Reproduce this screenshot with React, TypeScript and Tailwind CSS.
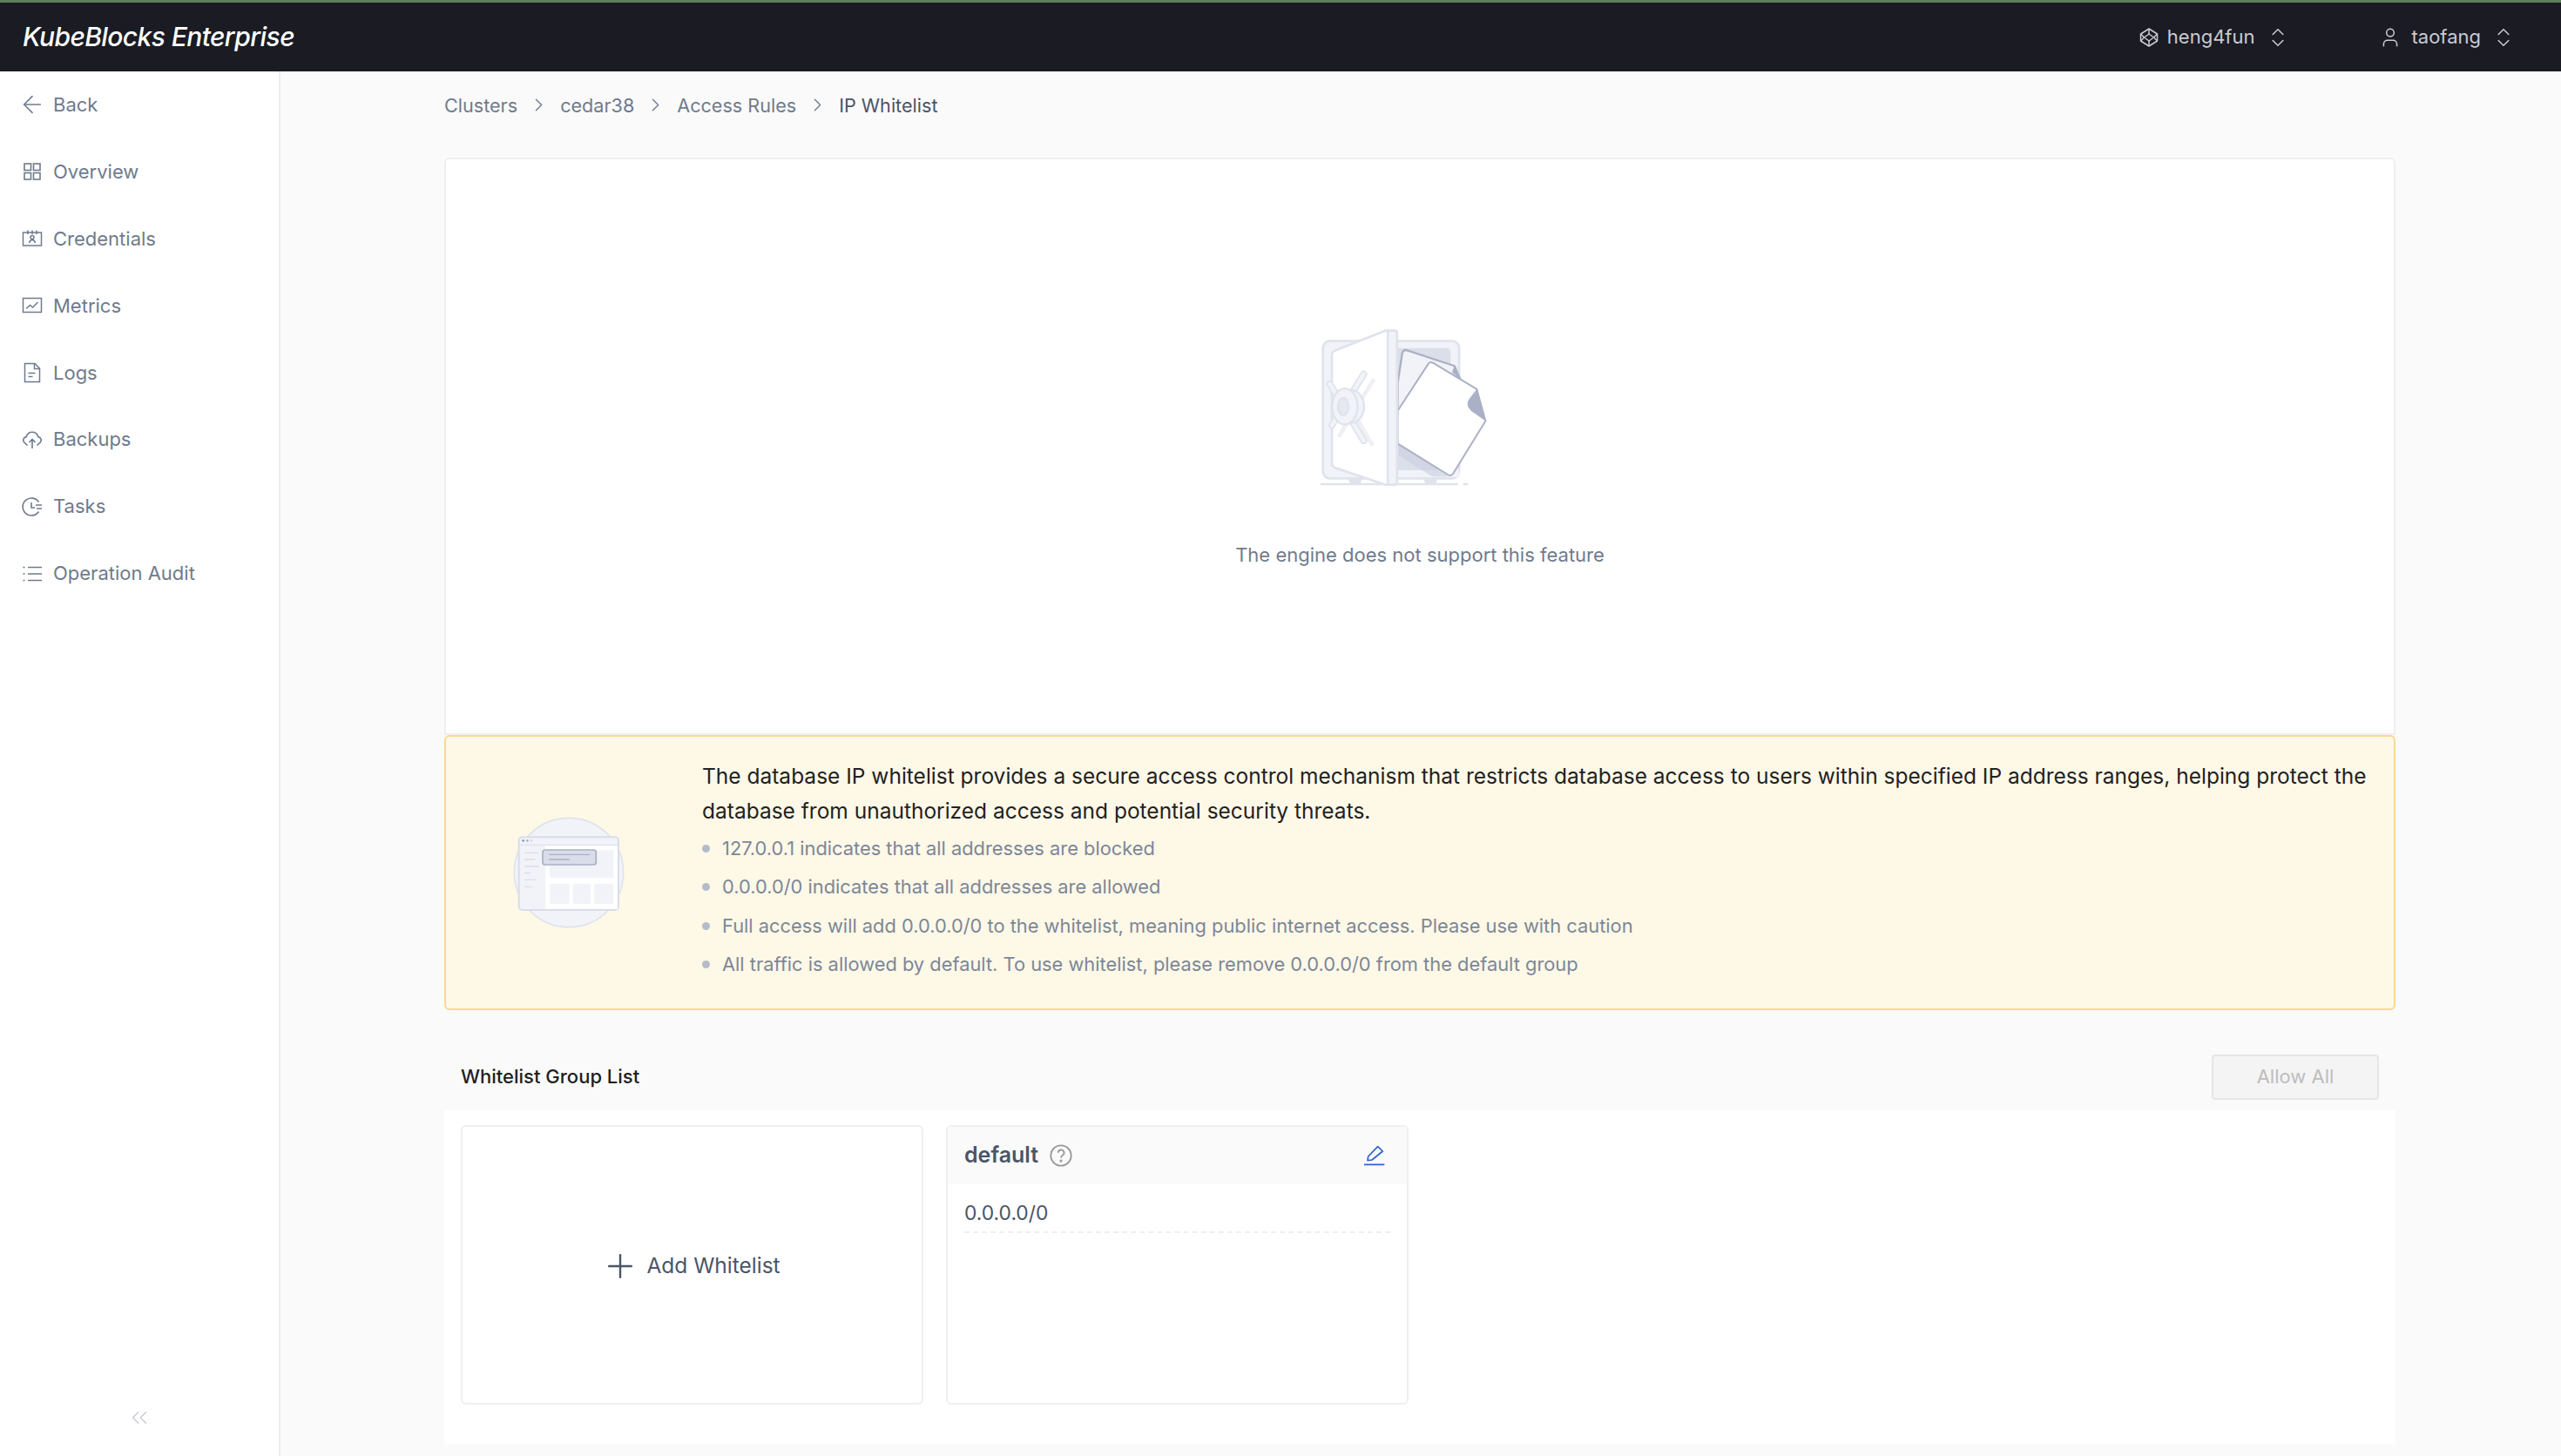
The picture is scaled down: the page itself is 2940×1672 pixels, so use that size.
import { ArrowLeft, ChevronRight, ChevronsLeft, ChevronsUpDown, Plus, User } from "lucide-react"

function OverviewIcon() {
  return (
    <svg viewBox="0 0 24 24" className="h-[24px] w-[24px]" fill="none" stroke="currentColor" strokeWidth="1.6">
      <rect x="3" y="3" width="7.5" height="7.5" />
      <rect x="13.5" y="3" width="7.5" height="7.5" />
      <rect x="3" y="13.5" width="7.5" height="7.5" />
      <rect x="13.5" y="13.5" width="7.5" height="7.5" />
    </svg>
  )
}

function CredentialsIcon() {
  return (
    <svg viewBox="0 0 24 24" className="h-[24px] w-[24px]" fill="none" stroke="currentColor" strokeWidth="1.5">
      <path d="M1.5 5h21v15h-21z" />
      <path d="M7 2.5v4.5M12 2.5v4.5M17 2.5v4.5" />
      <circle cx="12" cy="10.5" r="2" />
      <path d="M8.5 17c.5-2.5 2-3.5 3.5-3.5s3 1 3.5 3.5" />
    </svg>
  )
}

function MetricsIcon() {
  return (
    <svg viewBox="0 0 24 24" className="h-[24px] w-[24px]" fill="none" stroke="currentColor" strokeWidth="1.5">
      <rect x="1.5" y="3.5" width="21" height="16" />
      <path d="M5 15.5l4.5-4 3 2.5 6-6" />
    </svg>
  )
}

function LogsIcon() {
  return (
    <svg viewBox="0 0 24 24" className="h-[24px] w-[24px]" fill="none" stroke="currentColor" strokeWidth="1.5">
      <path d="M3.5 1.5H15l5.5 5.5v15.5h-17z" />
      <path d="M14.5 1.5v6h6" />
      <path d="M7.5 12.5h8M7.5 16.5h5" />
    </svg>
  )
}

function BackupsIcon() {
  return (
    <svg viewBox="0 0 24 24" className="h-[24px] w-[24px]" fill="none" stroke="currentColor" strokeWidth="1.6">
      <path d="M6.5 18.5L2.8 15c-2-2.5-.8-5.8 2.4-6.4a7 7 0 0 1 13.6 0c3.2.6 4.4 3.9 2.4 6.4l-3.7 3.5" />
      <path d="M12 22v-10M8.5 15l3.5-3.5 3.5 3.5" />
    </svg>
  )
}

function TasksIcon() {
  return (
    <svg viewBox="0 0 24 24" className="h-[24px] w-[24px]" fill="none" stroke="currentColor" strokeWidth="1.6">
      <path d="M19.5 6.5A10 10 0 1 0 19.5 17.5" />
      <path d="M11 7v6h4M16 10h7M17 14h6" />
    </svg>
  )
}

function AuditIcon() {
  return (
    <svg viewBox="0 0 24 24" className="h-[24px] w-[24px]" fill="none" stroke="currentColor" strokeWidth="1.5">
      <path d="M7 4.5h16M7 12h16M7 19.5h16" />
      <path d="M1.5 4.5h2M1.5 12h2M1.5 19.5h2" />
    </svg>
  )
}

function OrgIcon() {
  return (
    <svg viewBox="0 0 24 24" className="mr-[-3px] h-[24px] w-[24px]" fill="none" stroke="currentColor" strokeWidth="1.5" strokeLinejoin="round">
      <path d="M12 2l9.5 6v8L12 22l-9.5-6V8z" />
      <path d="M12 8l5.5 4-5.5 4-5.5-4z" />
      <path d="M2.5 8L6.5 12M21.5 8L17.5 12M2.5 16l4-4M21.5 16l-4-4M12 2v6M12 16v6" />
    </svg>
  )
}

function HelpIcon() {
  return (
    <svg viewBox="0 0 24 24" className="h-[28px] w-[28px] text-[#9a9a9a]" fill="none" stroke="currentColor" strokeWidth="1.6">
      <circle cx="12" cy="12" r="10" />
      <path d="M9.2 9.3a2.9 2.9 0 1 1 4.3 2.5c-1 .6-1.5 1.2-1.5 2.4" />
      <circle cx="12" cy="17.2" r="0.6" />
    </svg>
  )
}

function EditIcon() {
  return (
    <svg viewBox="1395 45 75 72" className="h-[24px] w-[25px] text-[#2f62c9]" fill="none" stroke="currentColor">
      <path d="M1445 50L1462 66L1425 96L1410 98L1412 84Z" strokeWidth="5" strokeLinejoin="round" />
      <path d="M1398 112h70" strokeWidth="5" />
    </svg>
  )
}

function VaultArt() {
  return (
    <svg viewBox="340 110 580 550" className="h-[183px] w-[193px]">
      <path d="M346 648h474M838 648h16" stroke="#dfe3ec" strokeWidth="8" />
      <path d="M440 630h50l-8 18h-32zM700 630h50l-8 18h-32z" fill="#dfe3ec" />
      <rect x="354" y="154" width="470" height="474" rx="24" fill="#f1f3f8" stroke="#dfe3ec" strokeWidth="8" />
      <rect x="600" y="178" width="195" height="422" rx="14" fill="#dbdfea" />
      <path d="M600 600h224v24H600z" fill="#f1f3f8" />
      <path d="M612 300L628 195Q632 182 645 186L808 240L830 290L700 400H612Z" fill="#f1f3f8" stroke="#abb1c5" strokeWidth="7" strokeLinejoin="round" />
      <path d="M808 238L830 288L800 262Z" fill="#abb1c5" />
      <path d="M612 505L790 622L730 622L612 545Z" fill="#c9cee0" opacity="0.6" />
      <path d="M612 395L718 232Q725 224 735 230L885 320L915 430L803 612Q796 622 785 615L612 508Z" fill="#ffffff" stroke="#abb1c5" strokeWidth="6" strokeLinejoin="round" />
      <path d="M885 320L915 430L865 395Q845 375 858 355Z" fill="#abb1c5" />
      <path d="M400 185L570 118H580V650H570L398 592Q385 587 385 575V200Q385 190 400 185Z" fill="#ffffff" stroke="#dfe3ec" strokeWidth="8" />
      <rect x="578" y="118" width="32" height="532" rx="8" fill="#f1f3f8" stroke="#dfe3ec" strokeWidth="8" />
      <path d="M530 285L408 485M430 350L526 515" stroke="#eef0f5" strokeWidth="14" />
      <path d="M495 268L385 445M378 302L495 498" stroke="#dfe3ec" strokeWidth="24" strokeLinecap="round" />
      <path d="M495 268L385 445M378 302L495 498" stroke="#f1f3f8" strokeWidth="14" strokeLinecap="round" />
      <ellipse cx="452" cy="380" rx="44" ry="56" fill="#f1f3f8" stroke="#dfe3ec" strokeWidth="7" />
      <ellipse cx="430" cy="380" rx="44" ry="62" fill="#f1f3f8" stroke="#dfe3ec" strokeWidth="7" />
      <ellipse cx="424" cy="380" rx="18" ry="30" fill="#e7e9f0" stroke="#dfe3ec" strokeWidth="7" />
    </svg>
  )
}

function BrowserArt() {
  return (
    <svg viewBox="85 50 390 390" className="h-[130px] w-[130px]">
      <circle cx="280" cy="245" r="188" fill="#f1f3f8" stroke="#dfe3ec" strokeWidth="5" />
      <rect x="108" y="123" width="343" height="251" rx="12" fill="#f1f3f8" stroke="#d9ddea" strokeWidth="6" />
      <path d="M200 152h248v218H200z" fill="#ffffff" />
      <path d="M110 150h340" stroke="#d9ddea" strokeWidth="3" />
      <circle cx="123" cy="135" r="4" fill="#8e95ab" />
      <circle cx="137" cy="135" r="4" fill="#abb1c5" />
      <circle cx="151" cy="135" r="4" fill="#d4d8e3" />
      <path d="M127 177h46M127 200h38M127 224h50M127 247h20M127 270h41M127 294h26" stroke="#d9ddea" strokeWidth="4" />
      <rect x="214" y="168" width="220" height="96" rx="6" fill="#f1f3f8" />
      <rect x="215" y="283" width="67" height="70" rx="6" fill="#f1f3f8" />
      <rect x="294" y="283" width="61" height="70" rx="6" fill="#f1f3f8" />
      <rect x="367" y="283" width="67" height="70" rx="6" fill="#f1f3f8" />
      <rect x="190" y="167" width="184" height="51" rx="8" fill="#d9ddea" stroke="#aab0c4" strokeWidth="5" />
      <path d="M212 183h140M212 200h70" stroke="#aab0c4" strokeWidth="4" />
    </svg>
  )
}

const navItems = [
  { label: "Back", icon: <ArrowLeft className="mx-[-4px] h-[32px] w-[32px]" strokeWidth={1.2} /> },
  { label: "Overview", icon: <OverviewIcon /> },
  { label: "Credentials", icon: <CredentialsIcon /> },
  { label: "Metrics", icon: <MetricsIcon /> },
  { label: "Logs", icon: <LogsIcon /> },
  { label: "Backups", icon: <BackupsIcon /> },
  { label: "Tasks", icon: <TasksIcon /> },
  { label: "Operation Audit", icon: <AuditIcon /> },
]

const crumbs = ["Clusters", "cedar38", "Access Rules"]

const notes = [
  "127.0.0.1 indicates that all addresses are blocked",
  "0.0.0.0/0 indicates that all addresses are allowed",
  "Full access will add 0.0.0.0/0 to the whitelist, meaning public internet access. Please use with caution",
  "All traffic is allowed by default. To use whitelist, please remove 0.0.0.0/0 from the default group",
]

export default function App() {
  return (
    <div className="flex h-[1672px] w-[2940px] flex-col overflow-hidden bg-[#fafafa] font-['Inter',sans-serif] text-[22px]">
      <header className="flex h-[82px] shrink-0 items-center justify-between border-t-[3px] border-[#5f8058] bg-[#1a1b23] pr-[52px] pl-[26px]">
        <span className="text-[30px] font-medium tracking-[-0.6px] text-white italic">KubeBlocks Enterprise</span>
        <div className="flex items-center text-[#c9cbd3]">
          <div className="flex items-center gap-[12px]">
            <OrgIcon />
            <span>heng4fun</span>
            <ChevronsUpDown className="h-[28px] w-[28px]" strokeWidth={1.3} />
          </div>
          <div className="ml-[102px] flex items-center gap-[12px]">
            <User className="h-[26px] w-[26px]" strokeWidth={1.4} />
            <span>taofang</span>
            <ChevronsUpDown className="h-[28px] w-[28px]" strokeWidth={1.3} />
          </div>
        </div>
      </header>
      <div className="flex min-h-0 flex-1">
        <aside className="flex w-[322px] shrink-0 flex-col justify-between border-r-2 border-[#ececee] bg-white pb-[29px]">
          <nav className="flex flex-col">
            {navItems.map((item) => (
              <div key={item.label} className="flex h-[76.9px] items-center gap-[12px] pl-[25px] text-[#6f7b8d]">
                {item.icon}
                <span>{item.label}</span>
              </div>
            ))}
          </nav>
          <div className="flex justify-center text-[#ccced6]">
            <ChevronsLeft className="h-[30px] w-[30px]" strokeWidth={1.3} />
          </div>
        </aside>
        <main className="flex-1 pl-[188px]">
          <div className="w-[2240px]">
            <div className="flex h-[99px] items-center pb-[21px] text-[21.6px] text-[#6f7b8d]">
              {crumbs.map((crumb) => (
                <div key={crumb} className="flex items-center">
                  <span>{crumb}</span>
                  <ChevronRight className="mx-[12px] h-[25px] w-[25px]" strokeWidth={1.3} />
                </div>
              ))}
              <span className="text-[#4a5568]">IP Whitelist</span>
            </div>
            <section className="flex h-[663px] flex-col items-center rounded-t-[6px] border-2 border-[#efeff2] bg-white pt-[194px]">
              <div className="mr-[40px]">
                <VaultArt />
              </div>
              <p className="mt-[61px] text-[#6f7b8d]">The engine does not support this feature</p>
            </section>
            <section className="flex h-[316px] items-center rounded-[6px] border-2 border-[#fad98f] bg-[#fef8e7] pr-[30px]">
              <div className="flex w-[294px] shrink-0 justify-center pr-[12px]">
                <BrowserArt />
              </div>
              <div className="mt-[-3px]">
                <p className="text-[24.5px] leading-[40px] text-[#222222]">
                  The database IP whitelist provides a secure access control mechanism that restricts database access to users within specified IP address ranges, helping protect the database from unauthorized access and potential security threats.
                </p>
                <ul className="mt-[1px] text-[21.85px]">
                  {notes.map((note) => (
                    <li key={note} className="flex h-[44.5px] items-center gap-[14px] text-[#7c8797]">
                      <span className="h-[9px] w-[9px] rounded-full bg-[#b5bcc9]" />
                      {note}
                    </li>
                  ))}
                </ul>
              </div>
            </section>
            <div className="flex h-[115px] items-center justify-between px-[19px] pt-[38px]">
              <span className="font-medium text-[#1f1f1f]">Whitelist Group List</span>
              <button className="h-[52px] w-[192px] rounded-[4px] border-2 border-[#e6e6e6] bg-[#f4f4f4] text-[#bdbdbd]">Allow All</button>
            </div>
            <section className="flex h-[383px] gap-[26px] bg-white px-[19px] pt-[17px]">
              <div className="flex h-[321px] w-[531px] items-center justify-center gap-[8px] rounded-[6px] border-2 border-[#efeff2] pt-[2px] pr-[3px] text-[#4a5568]">
                <Plus className="h-[44px] w-[44px]" strokeWidth={1.3} />
                <span className="text-[24.5px]">Add Whitelist</span>
              </div>
              <div className="h-[321px] w-[531px] overflow-hidden rounded-[6px] border-2 border-[#efeff2]">
                <div className="flex h-[66px] items-center justify-between bg-[#fafafa] pr-[25px] pl-[19px]">
                  <div className="flex items-center gap-[12px]">
                    <span className="text-[25px] font-semibold text-[#4a5568]">default</span>
                    <HelpIcon />
                  </div>
                  <EditIcon />
                </div>
                <div className="mx-[19px] flex h-[56px] items-center border-b-2 border-dashed border-[#efeff2] pt-[12px] text-[22.8px] text-[#4a5568]">0.0.0.0/0</div>
              </div>
            </section>
          </div>
        </main>
      </div>
    </div>
  )
}
